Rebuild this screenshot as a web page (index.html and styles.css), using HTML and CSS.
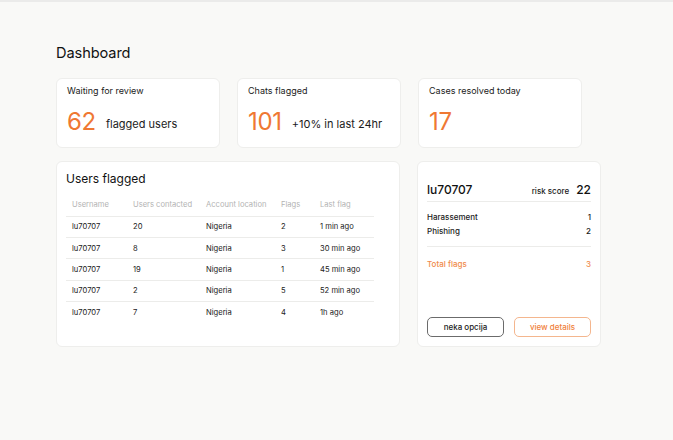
FILE: index.html
```html
<!DOCTYPE html>
<html lang="en">
<head>
<meta charset="utf-8">
<title>Dashboard</title>
<link rel="stylesheet" href="styles.css">
</head>
<body>
<div class="topbar"></div>
<main class="main">
  <h1 class="title">Dashboard</h1>
  <section class="stats">
    <div class="card stat">
      <div class="stat-label">Waiting for review</div>
      <div class="stat-row"><span class="stat-num">62</span><span class="stat-note">flagged users</span></div>
    </div>
    <div class="card stat">
      <div class="stat-label">Chats flagged</div>
      <div class="stat-row"><span class="stat-num">101</span><span class="stat-note">+10% in last 24hr</span></div>
    </div>
    <div class="card stat">
      <div class="stat-label">Cases resolved today</div>
      <div class="stat-row"><span class="stat-num">17</span></div>
    </div>
  </section>
  <section class="lower">
    <div class="card users">
      <h2 class="users-title">Users flagged</h2>
      <table class="table">
        <thead>
          <tr><th class="c1">Username</th><th class="c2">Users contacted</th><th class="c3">Account location</th><th class="c4">Flags</th><th class="c5">Last flag</th></tr>
        </thead>
        <tbody>
          <tr><td>lu70707</td><td>20</td><td>Nigeria</td><td>2</td><td>1 min ago</td></tr>
          <tr><td>lu70707</td><td>8</td><td>Nigeria</td><td>3</td><td>30 min ago</td></tr>
          <tr><td>lu70707</td><td>19</td><td>Nigeria</td><td>1</td><td>45 min ago</td></tr>
          <tr><td>lu70707</td><td>2</td><td>Nigeria</td><td>5</td><td>52 min ago</td></tr>
          <tr><td>lu70707</td><td>7</td><td>Nigeria</td><td>4</td><td>1h ago</td></tr>
        </tbody>
      </table>
    </div>
    <div class="card detail">
      <div class="detail-head">
        <span class="detail-user">lu70707</span>
        <span class="risk"><span class="risk-label">risk score</span><span class="risk-val">22</span></span>
      </div>
      <div class="detail-list">
        <div class="detail-item"><span>Harassement</span><span>1</span></div>
        <div class="detail-item"><span>Phishing</span><span>2</span></div>
      </div>
      <div class="detail-total"><span>Total flags</span><span>3</span></div>
      <div class="actions">
        <button class="btn btn-plain">neka opcija</button>
        <button class="btn btn-accent">view details</button>
      </div>
    </div>
  </section>
</main>
</body>
</html>
```
FILE: styles.css
```css
* { box-sizing: border-box; }
html, body { margin: 0; padding: 0; }
body {
  background: #f9f9f7;
  font-family: Inter, "Noto Sans", sans-serif;
  color: #1b1b1b;
  width: 673px;
  height: 440px;
  overflow: hidden;
}
.topbar { height: 2px; background: #ebebea; }
.main { padding: 42px 0 0 56px; }
.title {
  margin: 0;
  font-size: 14.6px;
  line-height: 18px;
  font-weight: 400;
  letter-spacing: -0.1px;
  color: #111;
}
.card {
  background: #fff;
  border: 1px solid #eeeeec;
  border-radius: 6px;
}
.stats {
  display: grid;
  grid-template-columns: 164px 164px 164px;
  column-gap: 17px;
  margin-top: 16px;
}
.stat { height: 70px; padding: 6px 9px 0 10px; }
.stat-label { font-size: 9px; line-height: 12px; color: #1b1b1b; }
.stat-row {
  display: flex;
  align-items: baseline;
  gap: 10px;
  margin-top: 10px;
}
.stat-num {
  font-size: 24px;
  line-height: 30px;
  color: #ef7833;
  letter-spacing: -0.3px;
}
.stat-note { font-size: 11px; color: #1b1b1b; position: relative; top: -2px; }
.lower {
  display: grid;
  grid-template-columns: 344px 184px;
  column-gap: 17px;
  margin-top: 13px;
}
.users { height: 186px; padding: 9px 26px 0 9px; }
.users-title {
  margin: 0;
  font-size: 12px;
  line-height: 16px;
  font-weight: 400;
  color: #111;
}
.table {
  width: 308px;
  border-collapse: collapse;
  margin-top: 7px;
  font-size: 7.6px;
  table-layout: fixed;
}
.table th {
  font-weight: 400;
  color: #b3b3b3;
  text-align: left;
  height: 22px;
  padding: 0 0 0 6px;
  border-bottom: 1px solid #ececea;
}
.c1 { width: 61px; }
.c2 { width: 73px; }
.c3 { width: 75px; }
.c4 { width: 39px; }
.table td {
  height: 21.4px;
  padding: 0 0 0 6px;
  color: #222;
  border-bottom: 1px solid #ececea;
}
.table tbody tr:last-child td { border-bottom: none; }
.detail {
  height: 186px;
  padding: 20px 9px 9px 9px;
  display: flex;
  flex-direction: column;
}
.detail-head {
  display: flex;
  justify-content: space-between;
  align-items: baseline;
  padding-bottom: 3px;
  border-bottom: 1px solid #ececea;
}
.detail-user { font-size: 12px; line-height: 16px; font-weight: 500; color: #111; }
.risk { display: flex; align-items: baseline; gap: 7px; }
.risk-label { font-size: 8px; font-weight: 500; }
.risk-val { font-size: 12px; font-weight: 500; color: #111; }
.detail-list {
  padding: 8px 0 8px;
  border-bottom: 1px solid #ececea;
}
.detail-item {
  display: flex;
  justify-content: space-between;
  font-size: 8px;
  line-height: 14px;
  font-weight: 500;
}
.detail-total {
  display: flex;
  justify-content: space-between;
  font-size: 8px;
  line-height: 14px;
  font-weight: 500;
  color: #f08a4b;
  margin-top: 10px;
}
.actions {
  margin-top: auto;
  display: flex;
  gap: 10px;
}
.btn {
  width: 77px;
  height: 20px;
  border-radius: 5px;
  background: #fff;
  font-family: inherit;
  font-size: 8px;
  font-weight: 500;
  padding: 0;
  cursor: pointer;
}
.btn-plain { border: 1px solid #6b6b6b; color: #222; }
.btn-accent { border: 1px solid #f4b68e; color: #f07f3c; }
```
